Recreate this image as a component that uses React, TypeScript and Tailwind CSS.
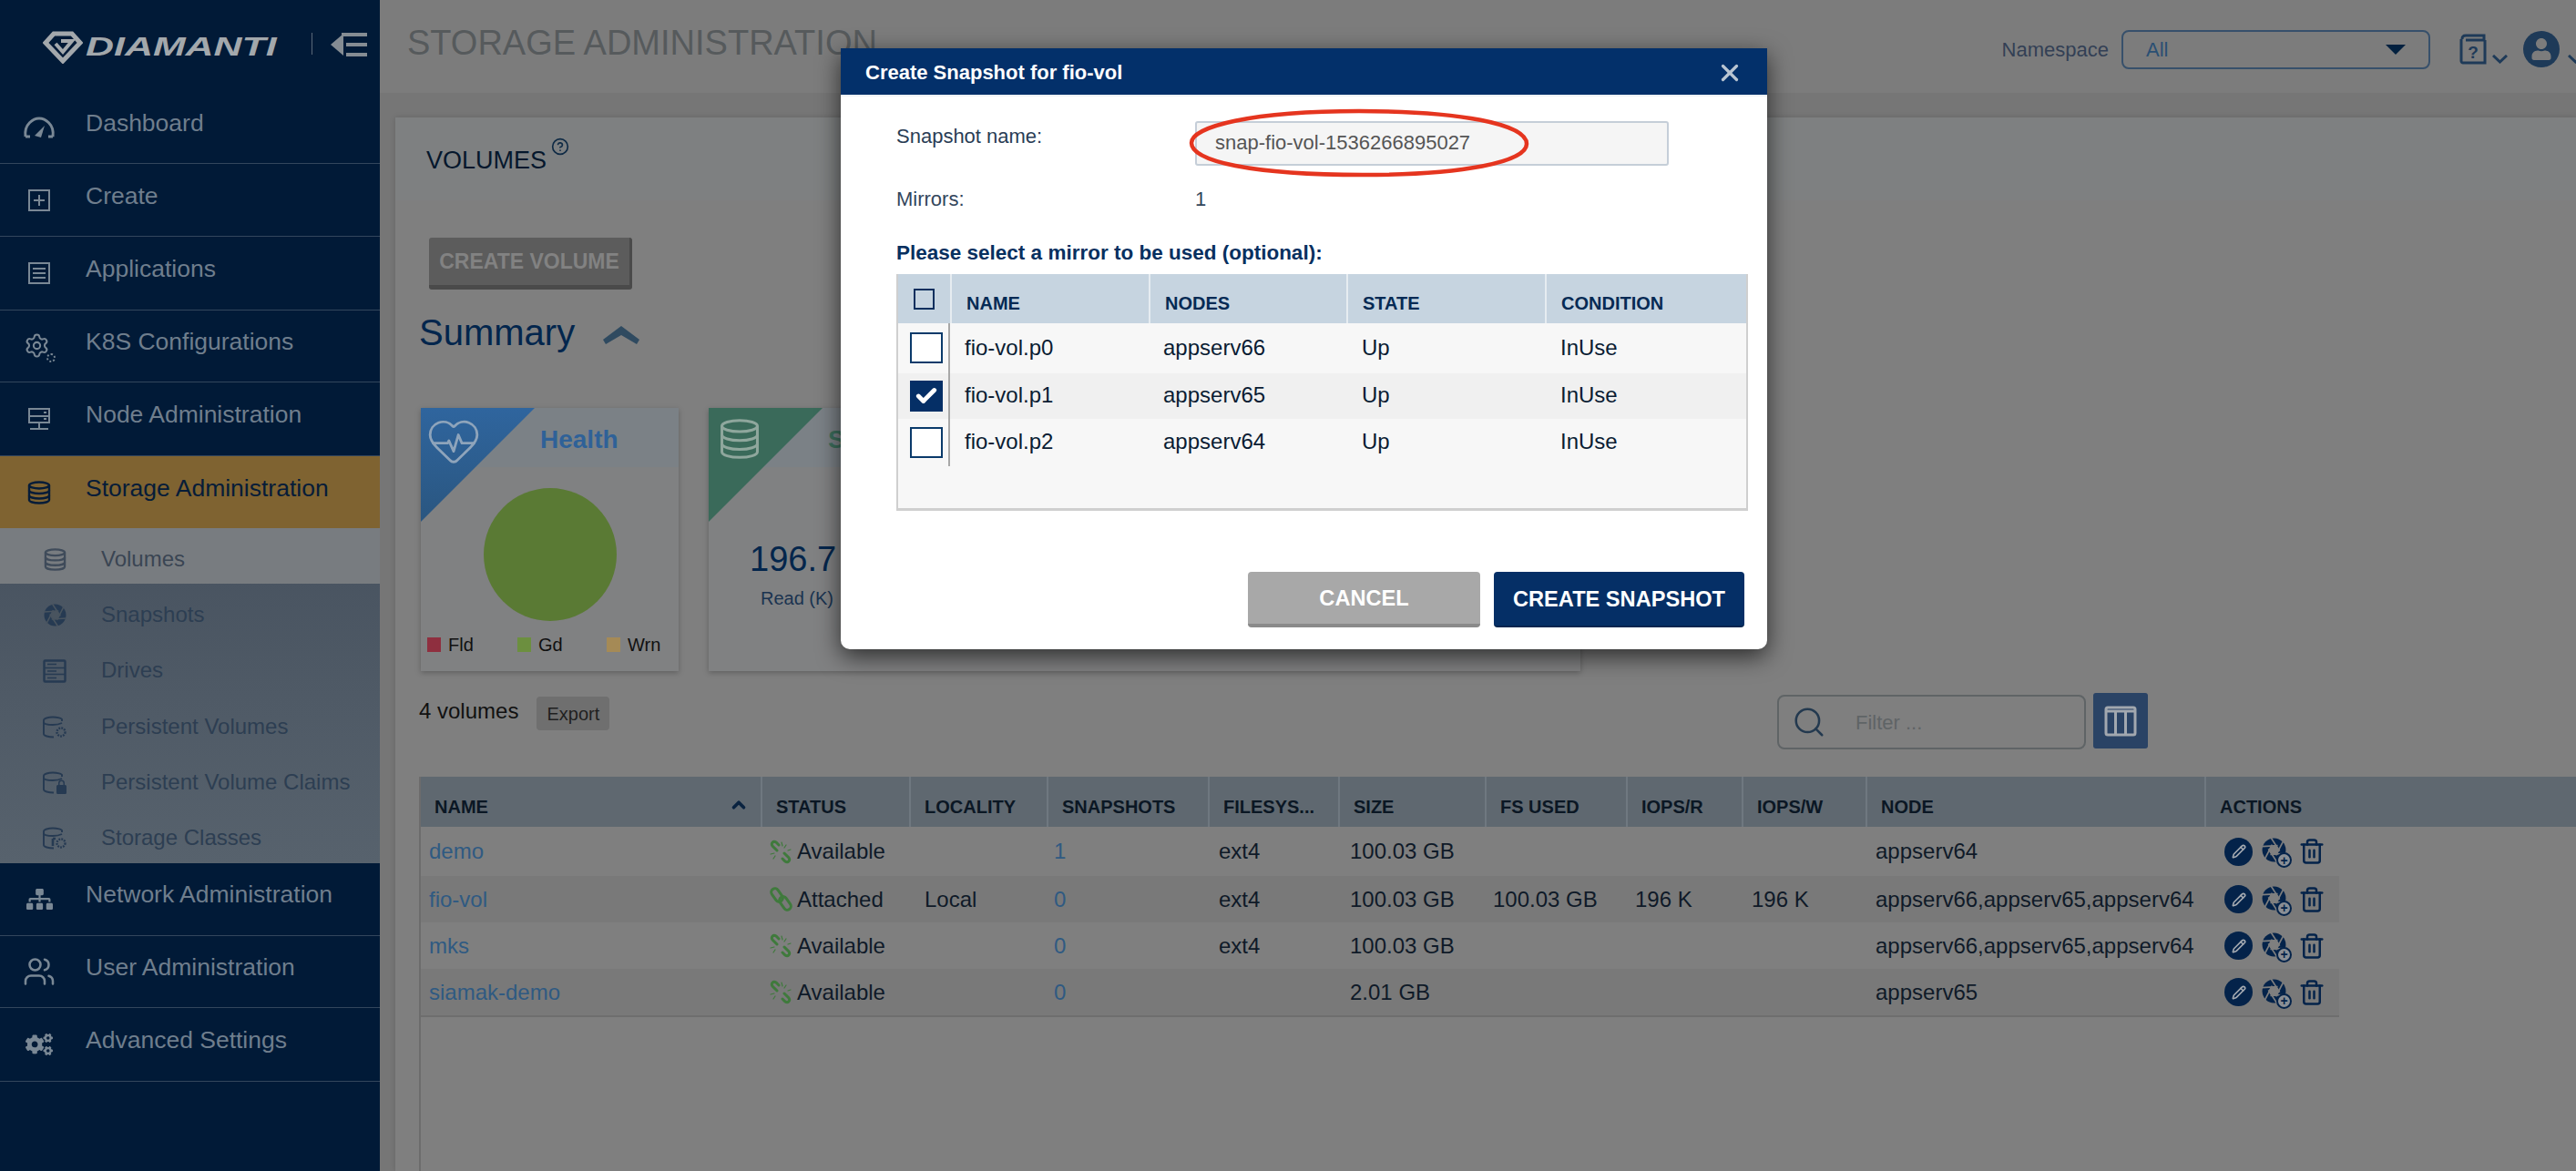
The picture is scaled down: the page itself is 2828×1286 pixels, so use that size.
import React from "react";
import { Check, ChevronUp, HeartPulse, Pencil, Search, Settings, Trash2, Users, X, CircleHelp } from "lucide-react";
import { FaCogs, FaSitemap, FaUser } from "react-icons/fa";

function Aperture({ size, bg, className }: { size: number; bg: string; className?: string }) {
  const blades = [0, 60, 120, 180, 240, 300];
  return (
    <svg width={size} height={size} viewBox="0 0 24 24" className={className}>
      <circle cx="12" cy="12" r="11.500" fill="currentColor" />
      {blades.map((a) => (
        <line key={a} x1="9" y1="0" x2="17.500" y2="13" stroke={bg} strokeWidth="1.500" transform={`rotate(${a} 12 12)`} />
      ))}
      <polygon points="12,7 16.300,9.500 16.300,14.500 12,17 7.700,14.500 7.700,9.500" fill={bg} />
    </svg>
  );
}

function Chain({ broken }: { broken: boolean }) {
  return (
    <svg width="26" height="27" viewBox="0 0 26 27" fill="none" stroke="#3f7a3c" strokeWidth="3" strokeLinecap="round" className="mr-[5px] shrink-0">
      {broken ? (
        <>
          <path d="M9 12L4 7c-2-3 1-6 4-4l3 3" />
          <path d="M17 15l5 5c2 3-1 6-4 4l-3-3" />
          <path d="M14 3l1 4M19 6l-2 3M2 16l4-1M5 21l2-3M21 12l3-1" strokeWidth="1.200" />
        </>
      ) : (
        <>
          <rect x="1" y="5" width="16" height="8" rx="4" transform="rotate(55 9 9)" />
          <rect x="10" y="14" width="16" height="8" rx="4" transform="rotate(55 18 18)" />
        </>
      )}
    </svg>
  );
}

function Gauge() {
  return (
    <svg width="36" height="24" viewBox="0 0 36 24" fill="none" stroke="currentColor" strokeWidth="3">
      <path d="M3 22 C1 8 12 2 18 2 C24 2 35 8 33 22 M3 22h5 M28 22h5" />
      <path d="M13 21 L24 10 L20 23 Z" fill="currentColor" stroke="none" />
    </svg>
  );
}

function BoxPlus() {
  return (
    <svg width="26" height="26" viewBox="0 0 26 26" fill="none" stroke="currentColor" strokeWidth="2">
      <rect x="2" y="2" width="22" height="22" />
      <path d="M13 7v12M7 13h12" />
    </svg>
  );
}

function BoxList() {
  return (
    <svg width="26" height="26" viewBox="0 0 26 26" fill="none" stroke="currentColor" strokeWidth="2">
      <rect x="2" y="2" width="22" height="22" />
      <path d="M6 8h14M6 13h14M6 18h14" />
    </svg>
  );
}

function K8sGear() {
  return (
    <div className="relative h-[30px] w-[34px]">
      <Settings size={29} strokeWidth={1.700} />
      <span className="absolute bottom-[-3px] right-[-1px] h-[10px] w-[10px] rounded-full border-2 border-dotted border-current" />
    </div>
  );
}

function NodeIcon() {
  return (
    <svg width="26" height="26" viewBox="0 0 26 26" fill="none" stroke="currentColor" strokeWidth="2">
      <rect x="2" y="2" width="22" height="15" />
      <path d="M2 10h22M13 17v7M3 24h20" />
      <path d="M18 6h3M18 13h3" />
    </svg>
  );
}

function Cylinder({ size = 26, sw = 2.400 }: { size?: number; sw?: number }) {
  return (
    <svg width={size} height={size} viewBox="0 0 26 26" fill="none" stroke="currentColor" strokeWidth={sw}>
      <ellipse cx="13" cy="5" rx="11" ry="3.500" />
      <path d="M2 5v16c0 2 5 3.500 11 3.500s11-1.500 11-3.500V5" />
      <path d="M2 10.500c0 2 5 3.500 11 3.500s11-1.500 11-3.500M2 16c0 2 5 3.500 11 3.500s11-1.500 11-3.500" />
    </svg>
  );
}

function Drives() {
  return (
    <svg width="26" height="26" viewBox="0 0 26 26" fill="none" stroke="currentColor" strokeWidth="2.400">
      <rect x="1.500" y="1.500" width="23" height="23" rx="1" />
      <path d="M2 9.500h22M2 16.500h22M5 5.500h10M5 13h10M5 20.500h10" strokeWidth="1.600" />
    </svg>
  );
}

function PvIcon({ variant }: { variant: "wheel" | "lock" | "key" }) {
  return (
    <svg width="28" height="26" viewBox="0 0 28 26" fill="none" stroke="currentColor" strokeWidth="1.900">
      <path d="M22 6V4c0-1-5-2.500-10-2.500S2 3 2 5v15c0 2 5 3.500 11 3.500" />
      <path d="M2 7c0 2 5 3 10 3s7-.5 10-2" />
      {variant === "lock" && (
        <g fill="currentColor" stroke="none">
          <rect x="16" y="15" width="11" height="10" rx="1.500" />
          <path d="M18 15v-2a3.500 3.500 0 0 1 7 0v2h-1.500v-2a2 2 0 0 0-4 0v2z" />
        </g>
      )}
      {variant !== "lock" && <circle cx="21" cy="18" r="4.500" strokeDasharray="1.800 1.200" strokeWidth="2.400" />}
      {variant === "key" && <path d="M12 13v8M12 13h3" strokeWidth="2.600" />}
    </svg>
  );
}

const topNav = [
  { label: "Dashboard", icon: <Gauge />, h: "h-[80px]" },
  { label: "Create", icon: <BoxPlus />, h: "h-[80px]" },
  { label: "Applications", icon: <BoxList />, h: "h-[81px]" },
  { label: "K8S Configurations", icon: <K8sGear />, h: "h-[79px]" },
  { label: "Node Administration", icon: <NodeIcon />, h: "h-[81px]" },
];

const subNav = [
  { label: "Volumes", icon: <Cylinder size={25} />, active: true },
  { label: "Snapshots", icon: <Aperture size={25} bg="#49545f" /> },
  { label: "Drives", icon: <Drives /> },
  { label: "Persistent Volumes", icon: <PvIcon variant="wheel" /> },
  { label: "Persistent Volume Claims", icon: <PvIcon variant="lock" /> },
  { label: "Storage Classes", icon: <PvIcon variant="key" /> },
];

const lowNav = [
  { label: "Network Administration", icon: <FaSitemap size={29} />, h: "h-[80px]" },
  { label: "User Administration", icon: <Users size={36} strokeWidth={1.700} />, h: "h-[79px]" },
  { label: "Advanced Settings", icon: <FaCogs size={30} />, h: "h-[81px]" },
];

function NavRow({ label, icon, h }: { label: string; icon: React.ReactNode; h: string }) {
  return (
    <div className={`${h} flex items-center border-b border-[#33465c] pb-[8px] text-[26.500px] text-[#6f7e8d]`}>
      <div className="flex w-[94px] shrink-0 items-center justify-center pr-[8px] pt-[8px] text-[#7a8895]">{icon}</div>
      <span>{label}</span>
    </div>
  );
}

function Sidebar() {
  return (
    <aside className="flex h-full w-[417px] shrink-0 flex-col bg-[#011a37]">
      <div className="flex h-[100px] items-start pl-[47px] pt-[34px]">
        <svg width="44" height="36" viewBox="0 0 44 36" fill="none" stroke="#a3a8ac" strokeWidth="5">
          <path d="M12 3h20l9 10-19 20L3 13z" />
          <path d="M14 14l8 9 10-12h-12" strokeWidth="4" />
        </svg>
        <span className="ml-[3px] mt-[1px] inline-block w-[146px] origin-left scale-x-[1.430] text-[30px] font-bold italic leading-[32px] text-[#a3a8ac]">DIAMANTI</span>
        <div className="ml-[102px] mt-[2px] h-[24px] w-px bg-[#5a6878]" />
        <svg width="40" height="27" viewBox="0 0 40 27" className="ml-[20px] mt-[2px]" fill="#858c93">
          <path d="M0 13L14 1v24z" />
          <rect x="12" y="0" width="28" height="4" />
          <rect x="17" y="11" width="23" height="4" />
          <rect x="17" y="22" width="23" height="4" />
        </svg>
      </div>
      {topNav.map((n) => (
        <NavRow key={n.label} {...n} />
      ))}
      <div className="flex h-[79px] items-center bg-[#7f6331] pb-[8px] text-[26.500px] text-[#061c38]">
        <div className="flex w-[94px] shrink-0 items-center justify-center pr-[8px] pt-[8px]">
          <Cylinder />
        </div>
        <span>Storage Administration</span>
      </div>
      <div className="bg-gradient-to-b from-[#47525f] to-[#57626d]">
        {subNav.map((s) => (
          <div
            key={s.label}
            className={`flex h-[61.300px] items-center pt-[6px] text-[24px] ${s.active ? "bg-[#787c80] text-[#3a4553]" : "text-[#2d3e52]"}`}
          >
            <div className={`flex w-[111px] shrink-0 justify-center pl-[9px] pt-[2px] ${s.active ? "text-[#3f4b5a]" : "text-[#263a52]"}`}>{s.icon}</div>
            <span>{s.label}</span>
          </div>
        ))}
      </div>
      {lowNav.map((n) => (
        <NavRow key={n.label} {...n} />
      ))}
    </aside>
  );
}

function TopBar() {
  return (
    <header className="flex h-[102px] items-center bg-[#7c7c7c] pb-[8px]">
      <h1 className="ml-[30px] text-[38px] leading-none text-[#565a5c]">STORAGE ADMINISTRATION</h1>
      <div className="-mr-[8px] ml-auto mt-[14px] flex shrink-0 items-center">
        <span className="mr-[14px] text-[22px] text-[#334055]">Namespace</span>
        <div className="flex h-[43px] w-[339px] items-center justify-between rounded-lg border-2 border-[#37506b] pl-[25px] pr-[25px]">
          <span className="text-[22px] text-[#2a4f73]">All</span>
          <div className="h-0 w-0 border-x-[11px] border-t-[11px] border-x-transparent border-t-[#02203f]" />
        </div>
        <svg width="32" height="34" viewBox="0 0 32 34" fill="none" stroke="#1e3a58" strokeWidth="3" className="ml-[31px]">
          <path d="M4 6C4 3 5 2 8 2h20v5H8M3 6v24c0 1 1 2 2 2h24V7" />
          <text x="16" y="27" textAnchor="middle" fontSize="19" fontWeight="700" fill="#1e3a58" stroke="none">?</text>
        </svg>
        <svg width="17" height="10" viewBox="0 0 17 10" fill="none" stroke="#1e3a58" strokeWidth="3" className="ml-[5px] mt-[22px]">
          <path d="M1 1l7.500 7L16 1" />
        </svg>
        <div className="ml-[17px] flex h-[40px] w-[40px] shrink-0 items-center justify-center overflow-hidden rounded-full bg-[#1e3a58] text-[#7c7c7c]">
          <FaUser size={24} />
        </div>
        <svg width="17" height="10" viewBox="0 0 17 10" fill="none" stroke="#1e3a58" strokeWidth="3" className="ml-[9px] mt-[22px] shrink-0">
          <path d="M1 1l7.500 7L16 1" />
        </svg>
      </div>
    </header>
  );
}

function HealthCard() {
  const legend = [
    { l: "Fld", c: "bg-[#8f2f3f]", w: "w-[99px]" },
    { l: "Gd", c: "bg-[#6c8f3f]", w: "w-[98px]" },
    { l: "Wrn", c: "bg-[#a58a56]", w: "w-[60px]" },
  ];
  return (
    <div className="relative h-[289px] w-[283px] shrink-0 overflow-hidden bg-[#808182] shadow-[0_2px_6px_rgba(0,0,0,0.25)]">
      <div className="flex h-[65px] items-center bg-[#7b8186] pl-[131px] pt-[5px] text-[28px] font-bold text-[#2f6198]">Health</div>
      <div className="absolute left-0 top-0 h-[125px] w-[125px] bg-gradient-to-b from-[#2f659e] to-[#2a5680] [clip-path:polygon(0_0,100%_0,0_100%)]" />
      <HeartPulse size={62} strokeWidth={1.100} className="absolute left-[5px] top-[5px] text-[#8ea4bb]" />
      <div className="mx-auto mt-[23px] h-[146px] w-[146px] rounded-full bg-[#5a7a34]" />
      <div className="mt-[16px] flex items-center pl-[7px] text-[20px] leading-none text-[#101010]">
        {legend.map((x) => (
          <div key={x.l} className={`flex items-center ${x.w}`}>
            <span className={`mr-[8px] h-[16px] w-[15px] ${x.c}`} />
            {x.l}
          </div>
        ))}
      </div>
    </div>
  );
}

function StatsCard() {
  return (
    <div className="relative ml-[33px] h-[289px] w-[957px] shrink-0 overflow-hidden bg-[#808182] shadow-[0_2px_6px_rgba(0,0,0,0.25)]">
      <div className="flex h-[65px] items-center bg-[#7b8186] pl-[131px] pt-[5px] text-[28px] font-bold text-[#3c6e5c]">Storage</div>
      <div className="absolute left-0 top-0 h-[125px] w-[125px] bg-[#3a6a5a] [clip-path:polygon(0_0,100%_0,0_100%)]" />
      <div className="absolute left-[11px] top-[11px] text-[#8fa79d]">
        <Cylinder size={46} sw={1.700} />
      </div>
      <div className="ml-[45px] mt-[82px] w-[95px] whitespace-nowrap text-[38px] leading-none text-[#04264c]">196.7</div>
      <div className="ml-[57px] mt-[14px] text-[20px] leading-none text-[#1a3350]">Read (K)</div>
    </div>
  );
}

const cols = "grid-cols-[373px_163px_151px_177px_143px_161px_155px_127px_136px_372px_148px]";
const heads = ["NAME", "STATUS", "LOCALITY", "SNAPSHOTS", "FILESYS...", "SIZE", "FS USED", "IOPS/R", "IOPS/W", "NODE", "ACTIONS"];

const rows = [
  { name: "demo", st: "Available", loc: "", snap: "1", fs: "ext4", size: "100.03 GB", used: "", r: "", w: "", node: "appserv64", h: "h-[54px] bg-[#7f7f7f]" },
  { name: "fio-vol", st: "Attached", loc: "Local", snap: "0", fs: "ext4", size: "100.03 GB", used: "100.03 GB", r: "196 K", w: "196 K", node: "appserv66,appserv65,appserv64", h: "h-[51px] bg-[#797979]" },
  { name: "mks", st: "Available", loc: "", snap: "0", fs: "ext4", size: "100.03 GB", used: "", r: "", w: "", node: "appserv66,appserv65,appserv64", h: "h-[51px] bg-[#7f7f7f]" },
  { name: "siamak-demo", st: "Available", loc: "", snap: "0", fs: "", size: "2.01 GB", used: "", r: "", w: "", node: "appserv65", h: "h-[51px] bg-[#797979]" },
];

function VolumeTable() {
  return (
    <div className="mt-[30px] min-h-0 flex-1 border-l-2 border-[#6c6c6c]">
      <div className={`grid h-[55px] w-full ${cols} bg-[#5f6870]`}>
        {heads.map((h, i) => (
          <div key={h} className={`relative flex items-center pl-[15px] pt-[10px] text-[20px] font-bold leading-none text-[#0b1724] ${i ? "border-l-2 border-[#6f7880]" : ""}`}>
            {h}
            {i === 0 && <ChevronUp size={22} strokeWidth={4} className="absolute right-[13px] top-[20px] text-[#0a2340]" />}
          </div>
        ))}
      </div>
      <div className="w-[2106px] border-b-2 border-[#6e6e6e]">
        {rows.map((r) => (
          <div key={r.name} className={`grid items-center ${cols} ${r.h} text-[24px] leading-none text-[#0f1a28]`}>
            <div className="pl-[9px] text-[#2f5a82]">{r.name}</div>
            <div className="flex items-center whitespace-nowrap pl-[9px]">
              <Chain broken={r.st !== "Attached"} />
              {r.st}
            </div>
            <div className="pl-[17px]">{r.loc}</div>
            <div className="pl-[8px] text-[#2f5a82]">{r.snap}</div>
            <div className="pl-[12px]">{r.fs}</div>
            <div className="pl-[13px]">{r.size}</div>
            <div className="pl-[9px]">{r.used}</div>
            <div className="pl-[10px]">{r.r}</div>
            <div className="pl-[11px]">{r.w}</div>
            <div className="whitespace-nowrap pl-[11px]">{r.node}</div>
            <div className="flex items-center pl-[22px] text-[#04234a]">
              <div className="flex h-[31px] w-[31px] items-center justify-center rounded-full bg-[#04234a] text-[#a5abb2]">
                <Pencil size={16} strokeWidth={2.400} />
              </div>
              <div className="relative ml-[10px] h-[30px] w-[33px]">
                <Aperture size={27} bg="#7f7f7f" />
                <div className="absolute bottom-[-3px] right-0 flex h-[17px] w-[17px] items-center justify-center rounded-full border-2 border-[#04234a] bg-[#8a8f95] text-[14px] font-bold leading-none">+</div>
              </div>
              <Trash2 size={30} strokeWidth={2} className="ml-[7px]" />
            </div>
          </div>
        ))}
      </div>
    </div>
  );
}

function Content() {
  return (
    <div className="flex min-h-0 flex-1 flex-col bg-[#767676] pl-[17px] pt-[27px]">
      <div className="flex min-h-0 flex-1 flex-col bg-[#7f7f7f] shadow-[0_0_6px_rgba(0,0,0,0.15)]">
        <div className="flex h-[91px] items-center bg-[#7e8081] pl-[34px] pt-[3px] text-[27px] leading-none text-[#05172c]">
          VOLUMES
          <CircleHelp size={20} strokeWidth={2} className="-mt-[30px] ml-[5px] text-[#0f2a45]" />
        </div>
        <div className="flex min-h-0 flex-1 flex-col pl-[26px]">
          <div className="ml-[11px] mt-[41px] flex h-[57px] w-[223px] items-center justify-center rounded-[3px] border-b-[5px] border-r-[3px] border-[#4a4a4a] bg-[#5c5c5c] text-[23px] font-bold leading-none text-[#828282]">
            CREATE VOLUME
          </div>
          <div className="mt-[24px] flex h-[46px] items-center text-[40px] leading-none text-[#03264d]">
            Summary
            <svg width="40" height="20" viewBox="0 0 40 20" fill="#2f4a60" className="ml-[31px] mt-[6px]">
              <path d="M20 0l20 15-3 5-17-10L3 20l-3-5z" />
            </svg>
          </div>
          <div className="ml-[2px] mt-[60px] flex">
            <HealthCard />
            <StatsCard />
          </div>
          <div className="mt-[24px] flex h-[62px] items-start">
            <span className="mt-[8px] text-[24px] leading-none text-[#111]">4 volumes</span>
            <div className="ml-[20px] mt-[4px] flex h-[37px] w-[80px] items-center justify-center rounded-[4px] bg-[#6f6f6f] text-[20px] leading-none text-[#1f1f1f]">Export</div>
            <div className="ml-auto mr-[470px] flex">
              <div className="mt-[2px] flex h-[60px] w-[339px] items-center rounded-lg border-2 border-[#5f6466] pl-[14px] text-[#23394f]">
                <Search size={38} strokeWidth={1.600} className="mr-[32px] shrink-0" />
                <span className="text-[22px] text-[#5f6466]">Filter ...</span>
              </div>
              <div className="ml-[8px] flex h-[61px] w-[60px] items-center justify-center rounded-[3px] bg-[#2a4365]">
                <svg width="36" height="34" viewBox="0 0 36 34" fill="none" stroke="#a2a8af" strokeWidth="3">
                  <rect x="2" y="2" width="32" height="30" rx="2" />
                  <path d="M2 6h32M12.500 6v26M23.500 6v26" />
                </svg>
              </div>
            </div>
          </div>
          <VolumeTable />
        </div>
      </div>
    </div>
  );
}

function Modal() {
  const heads = ["NAME", "NODES", "STATE", "CONDITION"];
  const mirrors = [
    { n: "fio-vol.p0", a: "appserv66", bg: "bg-[#f7f7f7]", on: false, h: "h-[55px]", pb: "" },
    { n: "fio-vol.p1", a: "appserv65", bg: "bg-[#f0f0f0]", on: true, h: "h-[50px]", pb: "pb-[2px]" },
    { n: "fio-vol.p2", a: "appserv64", bg: "bg-[#f7f7f7]", on: false, h: "h-[52px]", pb: "pb-[2px]" },
  ];
  const grid = "grid-cols-[57px_218px_217px_218px_1fr]";
  return (
    <div className="absolute left-[923px] top-[53px] h-[660px] w-[1017px] rounded-b-[10px] bg-white shadow-[0_8px_26px_rgba(0,0,0,0.65)]">
      <div className="flex h-[51px] items-center justify-between bg-[#03306a] pl-[27px] pr-[26px] pt-[2px] text-[22px] font-bold leading-none text-white">
        Create Snapshot for fio-vol
        <X size={30} strokeWidth={2.600} className="text-[#b9c5d2]" />
      </div>
      <div className="h-[2px] bg-[#eef1f5]" />
      <div className="relative flex h-[49px] items-start pl-[61px] pt-[33px]">
        <span className="w-[328px] shrink-0 text-[22px] leading-none text-[#2a3d55]">Snapshot name:</span>
      </div>
      <div className="absolute left-[389px] top-[80px] flex h-[49px] w-[520px] items-center rounded-[3px] border-2 border-[#c5ced8] bg-[#f5f5f5] pb-[2px] pl-[20px] text-[22px] leading-none text-[#555]">
        snap-fio-vol-1536266895027
      </div>
      <svg className="absolute left-[381px] top-[66px]" width="376" height="76" viewBox="0 0 376 76" fill="none">
        <path d="M4 38C4 20 70 3 188 3c110 0 184 14 184 36 0 20-70 34-180 34C70 73 4 58 4 38z" stroke="#e5351f" strokeWidth="4.500" />
      </svg>
      <div className="mt-[53px] flex pl-[61px] text-[22px] leading-none text-[#33465c]">
        <span className="w-[328px]">Mirrors:</span>
        <span>1</span>
      </div>
      <div className="mt-[37px] pl-[61px] text-[22.500px] font-bold leading-none text-[#07305f]">Please select a mirror to be used (optional):</div>
      <div className="relative ml-[61px] mt-[11px] h-[260px] w-[935px] border-x-2 border-b-[3px] border-[#cfcfcf] bg-[#f7f7f7]">
        <div className={`grid h-[54px] ${grid} bg-[#c6d4e0]`}>
          <div className="flex items-center pl-[17px] pt-[2px]">
            <div className="h-[23px] w-[23px] border-2 border-[#0b2f5e]" />
          </div>
          {heads.map((h) => (
            <div key={h} className="flex items-center border-l-2 border-[#e6ecf1] pl-[16px] pt-[11px] text-[20px] font-bold leading-none text-[#052a54]">
              {h}
            </div>
          ))}
        </div>
        {mirrors.map((m) => (
          <div key={m.n} className={`grid items-center ${grid} ${m.h} ${m.bg} text-[24px] leading-none text-[#0a1c33]`}>
            <div className="flex h-full items-center border-r-2 border-[#a8a8a8] pl-[13px]">
              <div className={`flex h-[34px] w-[36px] items-center justify-center border-2 ${m.on ? "border-[#052f66] bg-[#052f66]" : "border-[#0a3a6a] bg-white"}`}>
                {m.on && <Check size={26} strokeWidth={4.500} className="text-white" />}
              </div>
            </div>
            <div className={`${m.pb} pl-[16px]`}>{m.n}</div>
            <div className={`${m.pb} pl-[16px]`}>{m.a}</div>
            <div className={`${m.pb} pl-[17px]`}>Up</div>
            <div className={`${m.pb} pl-[17px]`}>InUse</div>
          </div>
        ))}
      </div>
      <div className="mt-[67px] flex justify-end pr-[25px] text-[23.600px] font-bold leading-none text-white">
        <div className="flex h-[61px] w-[255px] items-center justify-center rounded-[4px] border-b-[4px] border-[#8a8a8a] bg-[#a8a8a8] pt-[3px]">CANCEL</div>
        <div className="ml-[15px] flex h-[61px] w-[275px] items-center justify-center rounded-[4px] border-b-[2px] border-[#03254f] bg-[#052f66] pt-[3px]">CREATE SNAPSHOT</div>
      </div>
    </div>
  );
}

export default function App() {
  return (
    <div className="relative flex h-[1286px] w-[2828px] overflow-hidden bg-[#7f7f7f] font-['Liberation_Sans',Arial,sans-serif]">
      <Sidebar />
      <main className="flex h-full min-w-0 flex-1 flex-col">
        <TopBar />
        <Content />
      </main>
      <Modal />
    </div>
  );
}
